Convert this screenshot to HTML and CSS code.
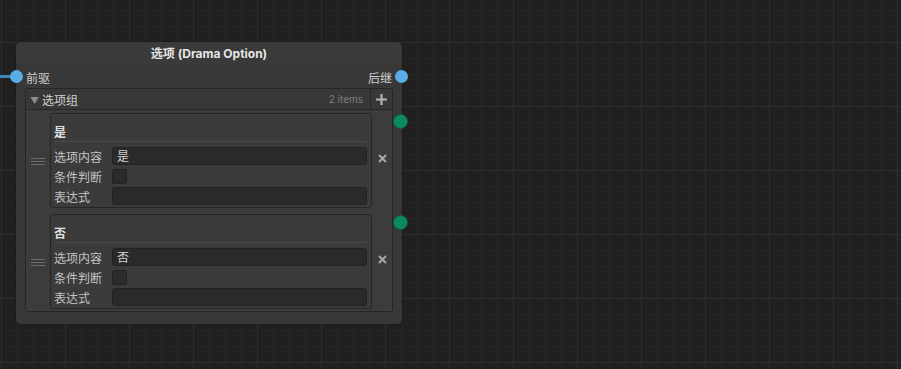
FILE: index.html
```html
<!DOCTYPE html>
<html lang="zh">
<head>
    <meta charset="UTF-8">
    <title>Drama Option</title>
    <link rel="stylesheet" href="styles.css">
</head>
<body>
    <div class="canvas">
        <div class="edge-in"></div>

        <div class="node">
            <div class="node-title">选项 (Drama Option)</div>

            <div class="ports">
                <span class="port port-in"></span>
                <span>前驱</span>
                <span>后继</span>
                <span class="port port-out"></span>
            </div>

            <div class="list">
                <div class="list-head">
                    <div class="list-name"><span class="caret">▼</span>选项组</div>
                    <div class="list-count">2 items</div>
                    <div class="list-add">
                        <svg width="11" height="11" viewBox="0 0 11 11"><path d="M5.5 0v11M0 5.5h11" stroke="#b4b4b4" stroke-width="2.2"/></svg>
                    </div>
                </div>
                <div class="list-body">
                    <div class="item">
                        <div class="handle"><i></i><i></i><i></i></div>
                        <div class="item-box">
                            <div class="item-title">是</div>
                            <div class="field"><label>选项内容</label><div class="input">是</div></div>
                            <div class="field"><label>条件判断</label><div class="check"></div></div>
                            <div class="field"><label>表达式</label><div class="input"></div></div>
                        </div>
                        <div class="remove">
                            <svg width="9" height="9" viewBox="0 0 9 9"><path d="M1 1l7 7M8 1l-7 7" stroke="#a8a8a8" stroke-width="2"/></svg>
                        </div>
                        <span class="port port-choice"></span>
                    </div>
                    <div class="item">
                        <div class="handle"><i></i><i></i><i></i></div>
                        <div class="item-box">
                            <div class="item-title">否</div>
                            <div class="field"><label>选项内容</label><div class="input">否</div></div>
                            <div class="field"><label>条件判断</label><div class="check"></div></div>
                            <div class="field"><label>表达式</label><div class="input"></div></div>
                        </div>
                        <div class="remove">
                            <svg width="9" height="9" viewBox="0 0 9 9"><path d="M1 1l7 7M8 1l-7 7" stroke="#a8a8a8" stroke-width="2"/></svg>
                        </div>
                        <span class="port port-choice"></span>
                    </div>
                </div>
            </div>
        </div>
    </div>
</body>
</html>
```

FILE: styles.css
```css
* {
    box-sizing: border-box;
}
body {
    margin: 0;
    background: #202020;
    font-family: "Inter", "Noto Sans CJK SC", sans-serif;
    font-size: 12px;
    color: #c8c8c8;
}
.canvas {
    position: relative;
    width: 901px;
    height: 369px;
    overflow: hidden;
    background-color: #202020;
    background-image:
        linear-gradient(to right, #2f2f2f 1px, transparent 1px),
        linear-gradient(to bottom, #2f2f2f 1px, transparent 1px),
        linear-gradient(to right, #262626 1px, transparent 1px),
        linear-gradient(to bottom, #262626 1px, transparent 1px);
    background-size: 64px 64px, 64px 64px, 16px 16px, 16px 16px;
    background-position: 1px 42px, 1px 42px, 1px 10px, 1px 10px;
}
.edge-in {
    position: absolute;
    left: 0;
    top: 75px;
    width: 12px;
    height: 3px;
    background: #3b86b6;
}
.node {
    position: absolute;
    left: 15px;
    top: 41px;
    width: 388px;
    height: 284px;
    background: #383838;
    border: 1px solid #1c1c1c;
    border-radius: 6px;
}
.node-title {
    height: 24px;
    line-height: 24px;
    text-align: center;
    font-weight: bold;
    color: #e6e6e6;
    background: #3a3a3a;
    border-radius: 6px 6px 0 0;
    border-bottom: 1px solid #333;
}
.ports {
    position: relative;
    display: flex;
    align-items: center;
    height: 22px;
    padding: 1px 10px 0 10px;
    color: #cfcfcf;
}
.ports span:nth-child(2) {
    flex: 1;
}
.port {
    position: absolute;
    width: 13px;
    height: 13px;
    border-radius: 50%;
}
.port-in,
.port-out {
    top: 4px;
    background: #58ade6;
}
.port-in {
    left: -6px;
}
.port-out {
    right: -6px;
}
.list {
    margin: 0 9px;
    border: 1px solid #262626;
    border-radius: 3px;
}
.list-head {
    display: flex;
    align-items: center;
    height: 21px;
    background: #383838;
    border-bottom: 1px solid #262626;
}
.list-name {
    flex: 1;
    padding-left: 4px;
    color: #d0d0d0;
}
.caret {
    font-size: 9px;
    color: #8c8c8c;
    margin-right: 3px;
    position: relative;
    top: -1px;
}
.list-count {
    font-size: 10px;
    color: #7c7c7c;
    padding-right: 7px;
}
.list-add {
    display: flex;
    align-items: center;
    justify-content: center;
    width: 22px;
    height: 100%;
    border-left: 1px solid #262626;
}
.list-body {
    display: flex;
    flex-direction: column;
    gap: 6px;
    padding: 3px 0 2px 0;
    background: #3c3c3c;
}
.item {
    position: relative;
    display: flex;
    align-items: center;
}
.handle {
    width: 24px;
    display: flex;
    flex-direction: column;
    align-items: center;
    gap: 2px;
    padding-top: 2px;
}
.handle i {
    display: block;
    width: 14px;
    height: 1px;
    background: #6c6c6c;
}
.item-box {
    flex: 1;
    padding: 0 4px 1px 3px;
    background: #3b3b3b;
    border: 1px solid #262626;
    border-radius: 3px;
}
.item-title {
    height: 28px;
    padding-top: 9px;
    font-weight: bold;
    color: #e0e0e0;
    border-bottom: 1px solid #4a4a4a;
    margin-bottom: 4px;
}
.field {
    display: flex;
    align-items: center;
    height: 20px;
}
.field label {
    width: 58px;
    color: #c4c4c4;
}
.input {
    flex: 1;
    height: 18px;
    line-height: 17px;
    padding-left: 4px;
    background: #2a2a2a;
    border: 1px solid #222;
    border-radius: 3px;
    color: #d0d0d0;
}
.check {
    width: 15px;
    height: 15px;
    background: #2b2b2b;
    border: 1px solid #222;
    border-radius: 2px;
}
.remove {
    display: flex;
    justify-content: center;
    width: 20px;
    padding-bottom: 4px;
}
.port-choice {
    top: 1px;
    right: -16px;
    width: 15px;
    height: 15px;
    background: #0e8a60;
    border: 1px solid #0a5f43;
}
```
